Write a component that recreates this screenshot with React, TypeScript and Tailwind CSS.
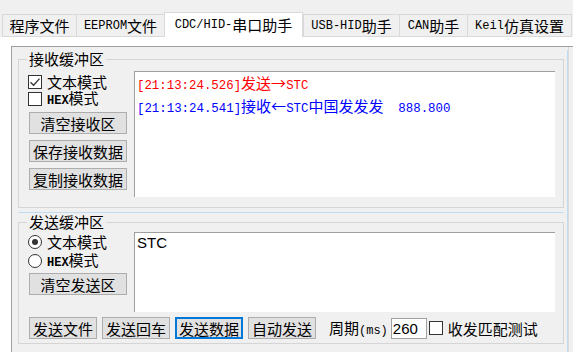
import React from 'react';

const CJK = "font-['Noto_Sans_CJK_SC','Noto_Sans',sans-serif]";
const MONO = "font-['Liberation_Mono',monospace] text-[12px]";
const LOG_MONO = "font-['Liberation_Mono',monospace] text-[12.4px]";

// split a label into ASCII and CJK runs so the half-width parts can use a narrow mono face
function Mixed({ text, ascii = MONO }: { text: string; ascii?: string }) {
  const parts = text.match(/[\x00-\x7F]+|[^\x00-\x7F]+/g) ?? [];
  return (
    <>
      {parts.map((p, i) =>
        /^[\x00-\x7F]+$/.test(p) ? (
          <span key={i} className={ascii}>
            {p}
          </span>
        ) : (
          <span key={i}>{p}</span>
        )
      )}
    </>
  );
}

const tabs = [
  { label: '程序文件', w: 'w-[74px]' },
  { label: 'EEPROM文件', w: 'w-[88px]' },
  { label: 'CDC/HID-串口助手', w: 'w-[139px]', active: true },
  { label: 'USB-HID助手', w: 'w-[96px]' },
  { label: 'CAN助手', w: 'w-[68px]' },
  { label: 'Keil仿真设置', w: 'w-[105px]', last: true },
];

function Tab({ label, w, active, last }: { label: string; w: string; active?: boolean; last?: boolean }) {
  if (active) {
    return (
      <div
        className={`${w} h-[25px] bg-white border-t border-l border-r border-[#d9d9d9] flex items-center justify-center pb-[1px] leading-none`}
      >
        <Mixed text={label} />
      </div>
    );
  }
  return (
    <div
      className={`${w} h-[23px] bg-[#f0f0f0] border-t border-l border-b border-[#d9d9d9] ${
        last ? 'border-r' : ''
      } flex items-center justify-center leading-none`}
    >
      <Mixed text={label} />
    </div>
  );
}

function Button({ label, w, primary }: { label: string; w: string; primary?: boolean }) {
  return (
    <div
      className={`${w} h-[22px] bg-[#e1e1e1] border flex items-center justify-center leading-none ${
        primary ? 'border-[#0078d7] shadow-[inset_0_0_0_1px_#0078d7]' : 'border-[#adadad]'
      }`}
    >
      {label}
    </div>
  );
}

function CheckBox({ checked }: { checked?: boolean }) {
  return (
    <div className="w-[14px] h-[14px] bg-white border border-[#333333] flex items-center justify-center">
      {checked && (
        <svg width="12" height="12" viewBox="0 0 12 12">
          <path d="M1.5 6.2 L4.6 9.2 L10.5 2.6" fill="none" stroke="#333333" strokeWidth="1.3" />
        </svg>
      )}
    </div>
  );
}

function Radio({ checked }: { checked?: boolean }) {
  return (
    <div className="w-[14px] h-[14px] rounded-full bg-white border border-[#333333] flex items-center justify-center">
      {checked && <div className="w-[6px] h-[6px] rounded-full bg-[#333333]" />}
    </div>
  );
}

function Option({
  label,
  kind,
  checked,
  h,
}: {
  label: string;
  kind: 'check' | 'radio';
  checked?: boolean;
  h: string;
}) {
  return (
    <div className={`${h} flex items-center gap-[5px] leading-none`}>
      {kind === 'check' ? <CheckBox checked={checked} /> : <Radio checked={checked} />}
      <span className="leading-none">
        <Mixed text={label} ascii="font-['Liberation_Mono',monospace] text-[12px] font-bold leading-none" />
      </span>
    </div>
  );
}

function Group({ title, children, className = '' }: { title: string; children: React.ReactNode; className?: string }) {
  return (
    <fieldset className={`border border-[#d5d5d5] ${className}`}>
      <legend className="ml-[8px] px-[2px] leading-[14px]">{title}</legend>
      {children}
    </fieldset>
  );
}

export default function App() {
  return (
    <div className={`w-[573px] h-[352px] overflow-hidden bg-[#f0f0f0] text-[15px] text-black ${CJK} flex flex-col`}>
      {/* tab strip */}
      <div className="h-[37px] flex items-end pl-[2px]">
        {tabs.map((t) => (
          <Tab key={t.label} {...t} />
        ))}
      </div>

      {/* tab page */}
      <div className="flex-1 bg-white pl-[11px] pt-[9px] flex flex-col">
        <div className="flex-1 bg-[#f0f0f0] border-t border-l border-[#a0a0a0] flex">
          <div className="w-[555px] pl-[6px] pr-[3px] pt-[5px] flex flex-col">
            <Group title="接收缓冲区">
              <div className="flex pl-[9px] pr-[8px] pt-[5px] pb-[10px]">
                <div className="w-[99px] mr-[7px] flex flex-col pt-[2px]">
                  <Option label="文本模式" kind="check" checked h="h-[17px]" />
                  <Option label="HEX模式" kind="check" h="h-[17px]" />
                  <div className="ml-[1px] mt-[5px] flex flex-col gap-[6px]">
                    <Button label="清空接收区" w="w-[98px]" />
                    <Button label="保存接收数据" w="w-[98px]" />
                    <Button label="复制接收数据" w="w-[98px]" />
                  </div>
                </div>
                <div className="flex-1 h-[126px] bg-white border-t border-l border-[#a0a0a0] pl-[2px] pt-[1px] leading-[19px] whitespace-pre">
                  <div className="text-[#ff0000]">
                    <Mixed text="[21:13:24.526]发送→STC" ascii={LOG_MONO} />
                  </div>
                  <div className="text-[#0000ff]">
                    <Mixed text="[21:13:24.541]接收←STC中国发发发  888.800" ascii={LOG_MONO} />
                  </div>
                </div>
              </div>
            </Group>

            <div className="mt-[4px] h-px bg-[#bfdcf2]" />

            <Group title="发送缓冲区" className="mt-[2px]">
              <div className="pl-[9px] pr-[8px] pt-[3px] pb-[4px]">
                <div className="flex">
                  <div className="w-[99px] mr-[7px] flex flex-col">
                    <Option label="文本模式" kind="radio" checked h="h-[19px]" />
                    <Option label="HEX模式" kind="radio" h="h-[19px]" />
                    <div className="ml-[1px] mt-[3px]">
                      <Button label="清空发送区" w="w-[98px]" />
                    </div>
                  </div>
                  <div className="flex-1 h-[80px] bg-white border-t border-l border-[#a0a0a0] pl-[2px] pt-[1px] font-['Liberation_Sans',sans-serif] leading-[18px]">
                    STC
                  </div>
                </div>
                <div className="mt-[5px] ml-[1px] flex items-center leading-none">
                  <div className="flex gap-[5px]">
                    <Button label="发送文件" w="w-[68px]" />
                    <Button label="发送回车" w="w-[68px]" />
                    <Button label="发送数据" w="w-[68px]" primary />
                    <Button label="自动发送" w="w-[68px]" />
                  </div>
                  <span className="ml-[13px]">
                    <Mixed text="周期(ms)" ascii="font-['Liberation_Mono',monospace] text-[12px]" />
                  </span>
                  <div className="ml-[3px] w-[36px] h-[21px] bg-white border border-[#a0a0a0] flex items-center pl-[1px] font-['Liberation_Sans',sans-serif] text-[15px]">
                    260
                  </div>
                  <div className="ml-[2px]">
                    <CheckBox />
                  </div>
                  <span className="ml-[5px]">收发匹配测试</span>
                </div>
              </div>
            </Group>
          </div>
          <div className="mt-[3px] w-px bg-[#bfdcf2]" />
          <div className="w-px bg-[#dadada]" />
          <div className="flex-1" />
        </div>
      </div>
    </div>
  );
}
